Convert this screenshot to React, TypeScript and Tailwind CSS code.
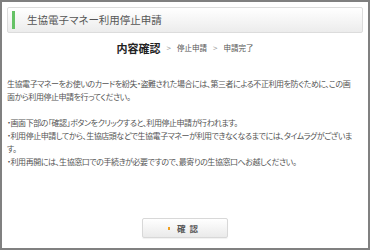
export default function App() {
  return (
    <div className="flex h-[250px] w-[370px] flex-col border-2 border-[#808080] bg-white px-[5px] pt-[5px] font-['Noto_Sans_CJK_JP',sans-serif] text-[#555] [font-feature-settings:'palt']">
      {/* page title */}
      <div className="flex h-[26px] items-center rounded-[2px] border border-[#dcdcdc] bg-gradient-to-b from-white to-[#ececec] pl-[4px]">
        <span className="h-[18px] w-[3px] bg-[#66c266]" />
        <h1 className="ml-[12px] text-[10.5px] leading-none font-normal text-[#555]">生協電子マネー利用停止申請</h1>
      </div>

      {/* steps */}
      <div className="mt-[8px] flex h-[14px] items-center justify-center gap-[6px] leading-[14px]">
        <span className="text-[11px] font-bold text-[#222]">内容確認</span>
        <span className="text-[8px] text-[#999]">&gt;</span>
        <span className="text-[7.5px] text-[#555]">停止申請</span>
        <span className="text-[8px] text-[#999]">&gt;</span>
        <span className="text-[7.5px] text-[#555]">申請完了</span>
      </div>

      {/* description */}
      <div className="mt-[22px] text-[8px] leading-[13px] tracking-[-0.45px] text-[#555]">
        <p className="whitespace-nowrap">
          生協電子マネーをお使いのカードを紛失・盗難された場合には、第三者による不正利用を防ぐために、この画
          <br />
          面から利用停止申請を行ってください。
        </p>
        <ul className="mt-[13px]">
          <li className="whitespace-nowrap">・画面下部の「確認」ボタンをクリックすると、利用停止申請が行われます。</li>
          <li className="whitespace-nowrap">
            ・利用停止申請してから、生協店頭などで生協電子マネーが利用できなくなるまでには、タイムラグがございま
            <br />
            す。
          </li>
          <li className="whitespace-nowrap">・利用再開には、生協窓口での手続きが必要ですので、最寄りの生協窓口へお越しください。</li>
        </ul>
      </div>

      {/* confirm */}
      <div className="mt-auto mb-[10px] flex justify-center">
        <button className="flex h-[20px] w-[86px] items-center justify-center rounded-[2px] border border-[#d8d8d8] bg-gradient-to-b from-white to-[#eaeaea] shadow-[0_1px_1px_rgba(0,0,0,0.06)]">
          <span className="mr-[7px] h-[3px] w-[2px] bg-[#f0a020]" />
          <span className="text-[8.5px] font-bold tracking-[4px] text-[#555]">確認</span>
        </button>
      </div>
    </div>
  )
}
